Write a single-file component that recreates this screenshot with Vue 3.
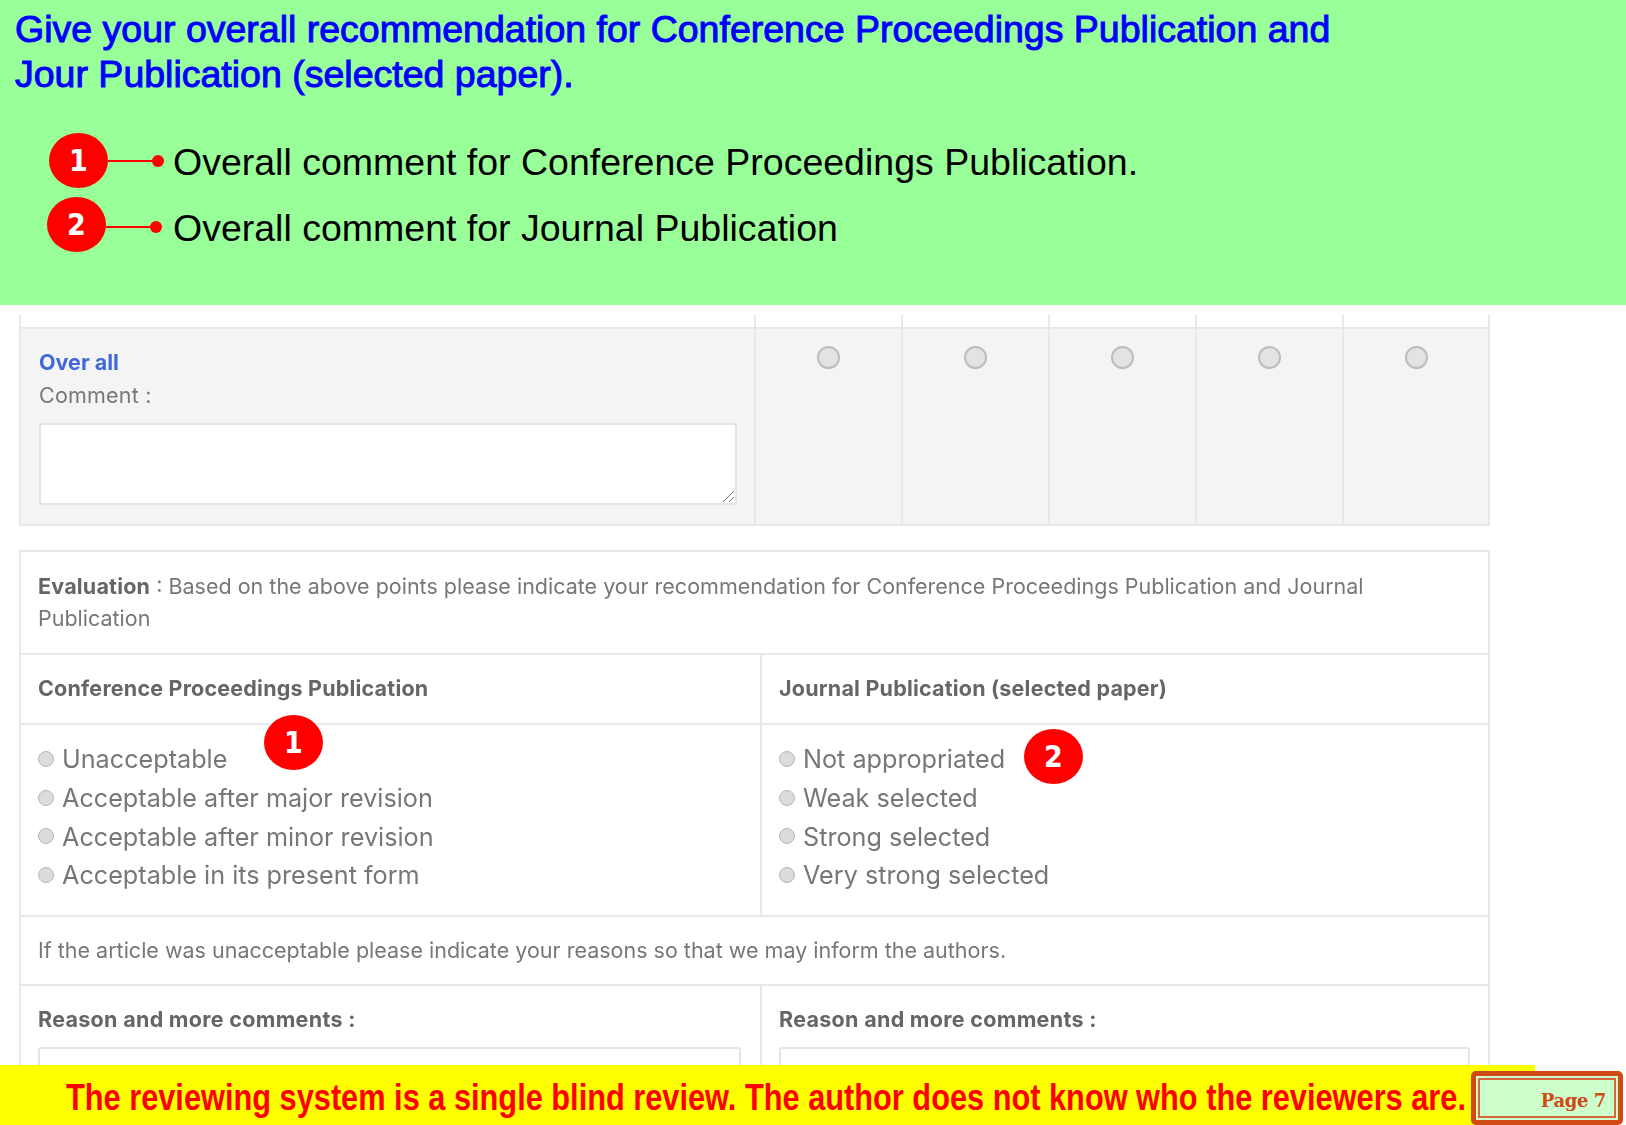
<script setup>
const cols = [1, 2, 3, 4, 5]
const left = ['Unacceptable', 'Acceptable after major revision', 'Acceptable after minor revision', 'Acceptable in its present form']
const right = ['Not appropriated', 'Weak selected', 'Strong selected', 'Very strong selected']
</script>

<template>
  <div class="page">
    <header class="intro">
      <h1 class="title">Give your overall recommendation for Conference Proceedings Publication and<br />Jour Publication (selected paper).</h1>
      <div class="legend">
        <div class="legend-row first">
          <span class="badge">1</span><span class="line"></span><span class="dot"></span>
          <span class="legend-text">Overall comment for Conference Proceedings Publication.</span>
        </div>
        <div class="legend-row second">
          <span class="badge">2</span><span class="line"></span><span class="dot"></span>
          <span class="legend-text">Overall comment for Journal Publication</span>
        </div>
      </div>
    </header>

    <main class="content">
      <section class="score">
        <div class="stub wide"></div>
        <div v-for="c in cols" :key="'s' + c" class="stub"></div>
        <div class="score-main">
          <div class="over">Over all</div>
          <div class="comment">Comment :</div>
          <div class="box tall"><svg class="grip" width="14" height="14" viewBox="0 0 14 14"><path d="M2 13 13 2M8 13l5-5" stroke="#777" stroke-width="1" fill="none" /></svg></div>
        </div>
        <div v-for="c in cols" :key="'r' + c" class="score-cell"><span class="radio big"></span></div>
      </section>

      <section class="eval">
        <div class="row intro-row"><b>Evaluation</b> : Based on the above points please indicate your recommendation for Conference Proceedings Publication and Journal<br />Publication</div>
        <div class="split head">
          <div class="cell"><b>Conference Proceedings Publication</b></div>
          <div class="cell"><b>Journal Publication (selected paper)</b></div>
        </div>
        <div class="split options">
          <div class="cell">
            <div v-for="o in left" :key="o" class="opt"><span class="radio"></span><span>{{ o }}</span></div>
          </div>
          <div class="cell">
            <div v-for="o in right" :key="o" class="opt"><span class="radio"></span><span>{{ o }}</span></div>
          </div>
          <span class="badge pin-one">1</span>
          <span class="badge pin-two">2</span>
        </div>
        <div class="row note">If the article was unacceptable please indicate your reasons so that we may inform the authors.</div>
        <div class="split reason">
          <div class="cell"><b class="label">Reason and more comments :</b><div class="box"></div></div>
          <div class="cell"><b class="label">Reason and more comments :</b><div class="box"></div></div>
        </div>
      </section>
    </main>

    <footer class="banner">
      <span class="banner-text">The reviewing system is a single blind review. The author does not know who the reviewers are.</span>
    </footer>
    <div class="page-tag"><div class="page-inner">Page 7</div></div>
  </div>
</template>

<style>
html, body { margin: 0; background: #fff; }
</style>

<style scoped>
.page {
  position: relative;
  width: 1626px;
  height: 1125px;
  overflow: hidden;
  background: #fff;
  display: flex;
  flex-direction: column;
  font-family: "Inter", "Liberation Sans", sans-serif;
  color: #777;
}
.intro {
  height: 305px;
  flex: none;
  background: #99ff99;
  font-family: "Liberation Sans", Arial, sans-serif;
  padding: 7px 0 0 15px;
  box-sizing: border-box;
}
.title {
  margin: 0;
  font-size: 37.5px;
  line-height: 45px;
  font-weight: 400;
  color: #0000ff;
  -webkit-text-stroke: 1px #0000ff;
}
.legend { margin-top: 36px; }
.legend-row { display: flex; align-items: center; height: 55px; }
.legend-row.first { margin-left: 34px; }
.legend-row.second { margin-left: 32px; margin-top: 9px; }
.badge {
  width: 59px;
  height: 55px;
  border-radius: 50%;
  background: #ff0000;
  color: #fff;
  font-family: "DejaVu Sans", sans-serif;
  font-stretch: condensed;
  font-weight: 700;
  font-size: 30px;
  display: flex;
  align-items: center;
  justify-content: center;
  flex: none;
}
.line { width: 44px; height: 2px; background: #ff0000; flex: none; }
.dot { width: 12px; height: 12px; border-radius: 50%; background: #ff0000; flex: none; margin-right: 9px; }
.legend-text { font-size: 37.5px; color: #000; white-space: nowrap; }
.first .legend-text { padding-top: 4px; }
.second .legend-text { margin-left: 2px; padding-top: 8px; }
.second .line, .second .dot { margin-top: 5px; }

.content { flex: 1; min-height: 0; overflow: hidden; padding: 10px 0 0 19px; filter: blur(0.35px); }

.score {
  width: 1471px;
  display: grid;
  grid-template-columns: 735px repeat(4, 147px) 148px;
  grid-template-rows: 12px 199px;
}
.stub { border-left: 2px solid #e6e8ec; }
.stub:nth-child(6) { border-right: 2px solid #e6e8ec; }
.stub.wide { border-right: 0; }
.score-main, .score-cell {
  background: #f4f4f4;
  border-top: 2px solid #e6e8ec;
  border-bottom: 2px solid #e6e8ec;
  border-left: 2px solid #e6e8ec;
}
.score-cell { display: flex; justify-content: center; padding-top: 17px; }
.score-cell:last-child { border-right: 2px solid #e6e8ec; }
.score-main { padding: 17px 18px 0 18px; }
.over { color: #4169d8; font-weight: 700; font-size: 21.5px; line-height: 32px; }
.comment { font-size: 21.5px; line-height: 32px; margin-top: 1px; letter-spacing: 0.2px; }
.box {
  position: relative;
  background: #fff;
  border: 2px solid #e2e4e9;
  border-radius: 3px;
  height: 78px;
}
.box.tall { width: 694px; margin-top: 12px; }
.grip { position: absolute; right: 0; bottom: 0; }

.radio {
  width: 16px;
  height: 16px;
  border-radius: 50%;
  background: #dcdcdc;
  border: 1px solid #b5b5b5;
  box-sizing: border-box;
  flex: none;
}
.radio.big { width: 23px; height: 23px; border-width: 2px; background: #e3e3e3; border-color: #bdbdbd; }

.eval {
  margin-top: 24px;
  width: 1471px;
  border: 2px solid #e6e8ec;
  box-sizing: border-box;
  font-size: 21.5px;
}
.eval b { font-weight: 700; color: #666; letter-spacing: 0.2px; }
.eval b.label { letter-spacing: 0.3px; }
.row { padding: 18px 17px; line-height: 32px; }
.intro-row { height: 101px; box-sizing: border-box; }
.split {
  position: relative;
  display: grid;
  grid-template-columns: 739px 1fr;
  border-top: 2px solid #e6e8ec;
  box-sizing: border-box;
}
.cell { padding: 0 17px; box-sizing: border-box; }
.cell + .cell { border-left: 2px solid #e6e8ec; }
.head { height: 70px; }
.head .cell { line-height: 66px; }
.options { height: 192px; }
.options .cell { padding-top: 15px; }
.opt { display: flex; align-items: center; gap: 8px; height: 38.7px; font-size: 25.2px; }
.opt .radio { margin-top: -1px; }
.note { border-top: 2px solid #e6e8ec; height: 69px; box-sizing: border-box; line-height: 66px; padding: 0 17px; }
.reason { height: 200px; }
.reason .cell { padding-top: 17px; line-height: 32px; }
.reason .box { margin-top: 12px; height: 100px; }
.reason .cell:last-child .box { width: 687px; }
.reason .cell:first-child .box { width: 699px; }
.pin-one { position: absolute; left: 243px; top: -10px; }
.pin-two { position: absolute; left: 1003px; top: 4px; }

.banner {
  flex: none;
  width: 1535px;
  height: 60px;
  background: #ffff00;
  display: flex;
  align-items: center;
  padding: 5px 0 0 66px;
  box-sizing: border-box;
}
.banner-text {
  color: #ff0000;
  font-family: "Liberation Sans", sans-serif;
  font-weight: 700;
  font-size: 37px;
  white-space: nowrap;
  transform: scaleX(0.831);
  transform-origin: left center;
}
.page-tag {
  position: absolute;
  left: 1471px;
  top: 1071px;
  width: 152px;
  height: 54px;
  border: 5px solid #d04a16;
  border-radius: 5px;
  box-sizing: border-box;
  padding: 2px;
  background: #ccffcc;
}
.page-inner {
  height: 100%;
  border: 2px solid #d4673a;
  box-sizing: border-box;
  font: 700 18px "DejaVu Serif", serif;
  letter-spacing: -0.4px;
  color: #d04a16;
  text-align: right;
  padding-right: 8px;
  line-height: 41px;
}
</style>
